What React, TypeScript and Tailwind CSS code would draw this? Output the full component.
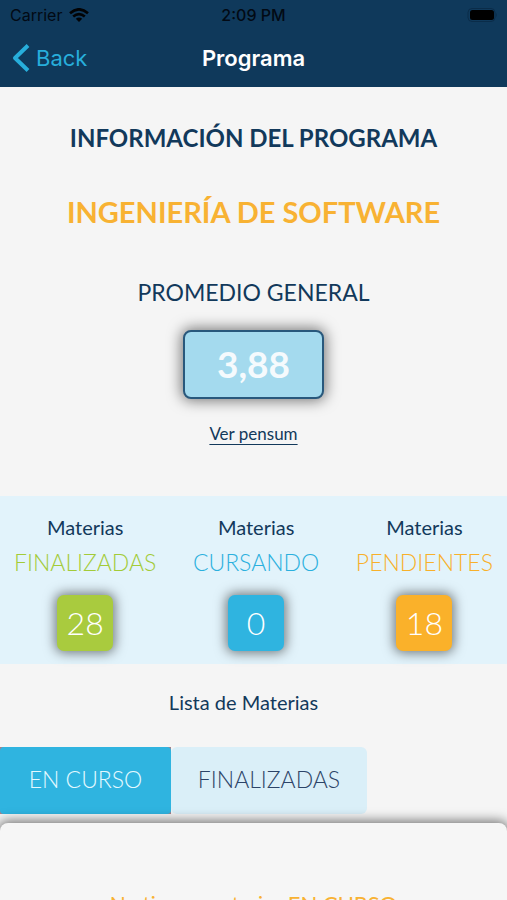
import type { ReactNode } from "react";

const stats = [
  { label: "FINALIZADAS", value: 28, text: "text-[#a3cb38]", box: "bg-[#a9cb3e]" },
  { label: "CURSANDO", value: 0, text: "text-[#2bb0de]", box: "bg-[#2fb4e0]" },
  { label: "PENDIENTES", value: 18, text: "text-[#f8b02a]", box: "bg-[#fab12a]" },
];

function StatusBar() {
  return (
    <div className="grid h-[30px] grid-cols-3 items-center px-[10px] text-[16px] text-[#020a14]">
      <div className="flex items-center gap-[7px]">
        <span>Carrier</span>
        <svg width="20" height="14" viewBox="0 0 20 14" aria-hidden="true">
          <g fill="none" stroke="#020305" strokeWidth="2.6">
            <path d="M1 5.2 Q10 -2.6 19 5.2" />
            <path d="M4.2 8.6 Q10 3.6 15.8 8.6" />
          </g>
          <path d="M6.8 10.8 Q10 8 13.2 10.8 L10 14 Z" fill="#020305" />
        </svg>
      </div>
      <span className="text-center font-medium">2:09 PM</span>
      <svg className="justify-self-end" width="30" height="14" viewBox="0 0 30 14" aria-hidden="true">
        <rect x="1" y="0.5" width="27" height="13" rx="4" fill="none" stroke="#0a2c49" />
        <rect x="3" y="2" width="24" height="10" rx="2.5" fill="#000" />
        <path d="M29 5 Q30.5 7 29 9 Z" fill="#0a2c49" />
      </svg>
    </div>
  );
}

function Tab({ className, labelClass, selected, children }: { className: string; labelClass: string; selected: boolean; children: ReactNode }) {
  return (
    <button type="button" role="tab" aria-selected={selected} className={`h-[67px] ${className}`}>
      <span className={`flex h-full items-center justify-center pb-[2px] text-[23px] font-light ${labelClass}`}>{children}</span>
    </button>
  );
}

export default function App() {
  return (
    <div className="h-screen overflow-hidden bg-[#f5f5f5] font-['Lato',sans-serif] text-[#12395b]">
      <header className="h-[87px] bg-[#0f395b] font-['Inter',sans-serif]">
        <StatusBar />
        <div className="grid h-[56px] grid-cols-3 items-center">
          <button type="button" className="flex items-center gap-[6px] pl-[12px] text-[22px] text-[#27aedb]">
            <svg width="18" height="28" viewBox="0 0 18 28" fill="none" stroke="currentColor" strokeWidth="4" aria-hidden="true">
              <path d="M16 1.5 L3 14 L16 26.5" strokeLinejoin="round" />
            </svg>
            Back
          </button>
          <h1 className="text-center text-[22px] font-semibold text-white">Programa</h1>
        </div>
      </header>

      <main>
        <section className="flex flex-col items-center pt-[34px] text-center">
          <h2 className="text-[24px] leading-[34px] font-bold">INFORMACIÓN DEL PROGRAMA</h2>
          <p className="mt-[38px] text-[29px] leading-[38px] font-bold text-[#f8b233]">INGENIERÍA DE SOFTWARE</p>
          <h3 className="mt-[44px] text-[23px] leading-[34px]">PROMEDIO GENERAL</h3>
          <div className="mt-[21px] flex h-[69px] w-[141px] items-center justify-center rounded-[8px] border-2 border-[#28587c] bg-[#a4daee] pb-[2px] text-[37px] font-bold text-[#f5fafd] shadow-[0_0_14px_2px_rgba(0,0,0,0.5)]">
            3,88
          </div>
          <a href="#pensum" className="mt-[22px] text-[17px] leading-[26px] underline underline-offset-4">
            Ver pensum
          </a>
        </section>

        <section className="mt-[49px] flex h-[168px] justify-between bg-[#e2f3fb] px-[14px] pt-[14px]">
          {stats.map((s) => (
            <div key={s.label} className="flex flex-col items-center">
              <span className="text-[20px] leading-[34px]">Materias</span>
              <span className={`text-[23px] leading-[36px] font-light ${s.text}`}>{s.label}</span>
              <span className={`mt-[15px] flex size-[56px] items-center justify-center rounded-[7px] text-[32px] font-light text-white shadow-[0_0_12px_2px_rgba(0,0,0,0.5)] ${s.box}`}>
                {s.value}
              </span>
            </div>
          ))}
        </section>

        <h3 className="mt-[21px] pr-[20px] text-center text-[20px] leading-[34px]">Lista de Materias</h3>

        <div role="tablist" className="mt-[28px] flex">
          <Tab selected className="w-[171px] bg-[#a5808c]" labelClass="rounded-[4px] bg-[#2fb4e0] text-[#e4f9ff]">
            EN CURSO
          </Tab>
          <Tab selected={false} className="w-[196px]" labelClass="rounded-[6px] bg-[#daeff8] text-[#2c4468]">
            FINALIZADAS
          </Tab>
        </div>

        <section className="relative mt-[9px] h-[160px] rounded-[8px] bg-[#f6f6f6] pt-[63px] text-center shadow-[0_0_12px_2px_rgba(0,0,0,0.55)]">
          <p className="text-[21px] leading-[36px] text-[#f8b233]">
            No tienes materias <span className="text-[22px]">EN CURSO</span>
          </p>
        </section>
      </main>
    </div>
  );
}
